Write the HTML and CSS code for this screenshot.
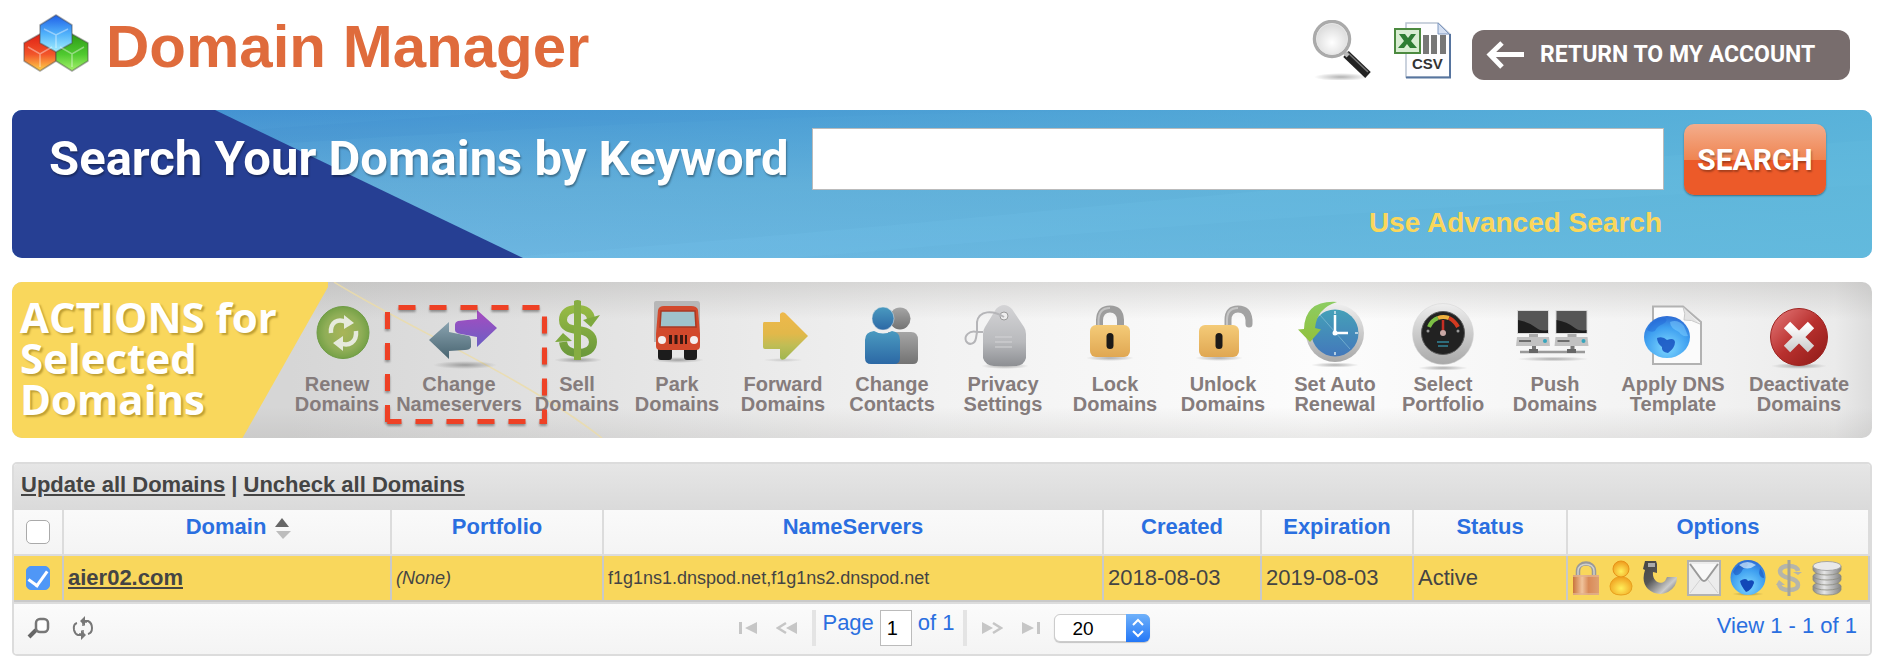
FILE: index.html
```html
<!DOCTYPE html>
<html lang="en">
<head>
<meta charset="utf-8">
<title>Domain Manager</title>
<link rel="stylesheet" href="styles.css">
</head>
<body>
<svg class="defs" aria-hidden="true">
  <defs>
    <linearGradient id="gBlueCube" x1="0" y1="0" x2="0" y2="1"><stop offset="0" stop-color="#1f5fe8"/><stop offset=".5" stop-color="#4fb0fa"/><stop offset="1" stop-color="#a5f0ff"/></linearGradient>
    <linearGradient id="gRedCube" x1="0" y1="0" x2="0" y2="1"><stop offset="0" stop-color="#e01f14"/><stop offset=".55" stop-color="#f2552a"/><stop offset="1" stop-color="#ffd34a"/></linearGradient>
    <linearGradient id="gGreenCube" x1="0" y1="0" x2="0" y2="1"><stop offset="0" stop-color="#2d9a17"/><stop offset=".55" stop-color="#4fc92f"/><stop offset="1" stop-color="#a6f26c"/></linearGradient>
    <radialGradient id="gLens" cx=".5" cy=".6" r=".6"><stop offset="0" stop-color="#fff"/><stop offset="1" stop-color="#d5d5d5"/></radialGradient>
    <linearGradient id="gSteel" x1="0" y1="0" x2="1" y2="0"><stop offset="0" stop-color="#888"/><stop offset=".4" stop-color="#e6e6e6"/><stop offset="1" stop-color="#858585"/></linearGradient>
    <linearGradient id="gBanner" x1="0" y1="0" x2="0" y2="1"><stop offset="0" stop-color="#418fd1"/><stop offset=".5" stop-color="#62a9d8"/><stop offset="1" stop-color="#6fb4e2"/></linearGradient>
    <linearGradient id="gTeal" x1="0" y1="0" x2="1" y2="0"><stop offset="0" stop-color="#5fbbdc" stop-opacity="0"/><stop offset="1" stop-color="#5fbbdc"/></linearGradient>
    <radialGradient id="gRenew"><stop offset="0" stop-color="#a9b558"/><stop offset=".7" stop-color="#8fae57"/><stop offset="1" stop-color="#76a147"/></radialGradient>
    <linearGradient id="gSlate" x1="0" y1="0" x2="0" y2="1"><stop offset="0" stop-color="#8aa3b0"/><stop offset="1" stop-color="#486470"/></linearGradient>
    <linearGradient id="gPurple" x1="0" y1="0" x2="0" y2="1"><stop offset="0" stop-color="#a84bc0"/><stop offset="1" stop-color="#6a5fc4"/></linearGradient>
    <linearGradient id="gDollar" x1="0" y1="0" x2="0" y2="1"><stop offset="0" stop-color="#95b944"/><stop offset="1" stop-color="#6d9a3c"/></linearGradient>
    <linearGradient id="gForward" x1="0" y1="0" x2="0" y2="1"><stop offset="0" stop-color="#efb94b"/><stop offset=".45" stop-color="#e2b84a"/><stop offset=".7" stop-color="#c0bd55"/><stop offset="1" stop-color="#9fb650"/></linearGradient>
    <linearGradient id="gMan" x1="0" y1="0" x2="0" y2="1"><stop offset="0" stop-color="#4a9ac0"/><stop offset="1" stop-color="#2c68a5"/></linearGradient>
    <linearGradient id="gManGrey" x1="0" y1="0" x2="0" y2="1"><stop offset="0" stop-color="#a5a5a5"/><stop offset="1" stop-color="#737373"/></linearGradient>
    <linearGradient id="gTag" x1="0" y1="0" x2="0" y2="1"><stop offset="0" stop-color="#d4d4d6"/><stop offset=".6" stop-color="#b9babd"/><stop offset="1" stop-color="#8d8f93"/></linearGradient>
    <linearGradient id="gGold" x1="0" y1="0" x2="0" y2="1"><stop offset="0" stop-color="#f4cb78"/><stop offset="1" stop-color="#e0a752"/></linearGradient>
    <linearGradient id="gClock" x1="0" y1="0" x2="0" y2="1"><stop offset="0" stop-color="#45a0b8"/><stop offset="1" stop-color="#4378bb"/></linearGradient>
    <linearGradient id="gRim" x1="0" y1="0" x2="0" y2="1"><stop offset="0" stop-color="#eee"/><stop offset="1" stop-color="#a8a8a8"/></linearGradient>
    <linearGradient id="gGreenArrow" x1="0" y1="0" x2="0" y2="1"><stop offset="0" stop-color="#8ccc62"/><stop offset="1" stop-color="#92c13c"/></linearGradient>
    <radialGradient id="gGlobe" cx=".5" cy=".75" r=".8"><stop offset="0" stop-color="#7fd8ff"/><stop offset=".6" stop-color="#3e9ff0"/><stop offset="1" stop-color="#2a62cf"/></radialGradient>
    <linearGradient id="gRed" x1="0" y1="0" x2="1" y2="1"><stop offset="0" stop-color="#e77c7c"/><stop offset=".5" stop-color="#b8302e"/><stop offset="1" stop-color="#8c1a16"/></linearGradient>
    <linearGradient id="gX" x1="0" y1="0" x2="0" y2="1"><stop offset="0" stop-color="#fff"/><stop offset="1" stop-color="#cfcfcf"/></linearGradient>
    <linearGradient id="gCopper" x1="0" y1="0" x2="1" y2="0"><stop offset="0" stop-color="#c9743c"/><stop offset=".35" stop-color="#f0c39c"/><stop offset=".6" stop-color="#d98a58"/><stop offset="1" stop-color="#dfa071"/></linearGradient>
    <radialGradient id="gAmber" cx=".5" cy=".65" r=".6"><stop offset="0" stop-color="#ffef5a"/><stop offset="1" stop-color="#f0a020"/></radialGradient>
    <linearGradient id="gPhone" x1="0" y1="0" x2="1" y2="1"><stop offset="0" stop-color="#444"/><stop offset=".4" stop-color="#555"/><stop offset=".75" stop-color="#ccc"/><stop offset="1" stop-color="#555"/></linearGradient>
    <radialGradient id="gShadow"><stop offset="0" stop-color="#000" stop-opacity=".3"/><stop offset="1" stop-color="#000" stop-opacity="0"/></radialGradient>
  </defs>
</svg>

<header class="page-header">
  <svg class="logo" viewBox="0 0 68 74" aria-hidden="true">
    <g stroke="#4a4a4a" stroke-opacity=".45" stroke-width="1.5" stroke-linejoin="round">
      <path d="M18 34 34 43V61L18 71 2 61V43Z" fill="url(#gRedCube)"/>
      <path d="M50 34 66 43V61L50 71 34 61V43Z" fill="url(#gGreenCube)"/>
      <path d="M34 15 50 25V43L34 52 18 43V25Z" fill="url(#gBlueCube)"/>
    </g>
    <g fill="none" stroke="#fff" stroke-opacity=".4" stroke-width="1.5">
      <path d="M6 47 18 54 30 47M18 54V67M38 47 50 54 62 47M50 54V67M22 29 34 35 46 29M34 35V48"/>
    </g>
  </svg>
  <h1 class="page-title">Domain Manager</h1>
  <nav class="header-tools" aria-label="Tools">
    <a class="tool" href="#search" aria-label="Search">
      <svg class="tool-icon" viewBox="0 0 60 60">
        <ellipse cx="29" cy="57" rx="27" ry="4" fill="url(#gShadow)"/>
        <path d="m34 34 22 21" stroke="#222" stroke-width="8"/>
        <path d="m35 32 21 20" stroke="#777" stroke-width="1.5"/>
        <path d="m31 31 5 5" stroke="#bbb" stroke-width="4"/>
        <circle cx="20" cy="19" r="17.5" fill="url(#gLens)" stroke="#aaa" stroke-width="3.5"/>
        <circle cx="20" cy="19" r="15.5" fill="none" stroke="#e6e6e6" stroke-width="1"/>
      </svg>
    </a>
    <a class="tool" href="#csv" aria-label="Export CSV">
      <svg class="tool-icon" viewBox="0 0 60 60">
        <path d="M14 3h32l12 11v43H14z" fill="#fdfdff" stroke="#b9c3d2" stroke-width="1.5"/>
        <path d="M58 14V57.500H14" fill="none" stroke="#56749f" stroke-width="2"/>
        <path d="m46 3 11 11H46z" fill="#d5e0f2" stroke="#7f98c0"/>
        <path d="M31 15h6v19h-6zM39 15h6v19h-6zM48 15h6v19h-6z" fill="#777"/>
        <path d="M3 9h25v24H3z" fill="#d9edd2" stroke="#4c8a40" stroke-width="2"/>
        <path d="M7 14h6l3 4 3-4h5l-5 7 6 7h-7l-3-4-3 4H6l6-7z" fill="#2f7d33"/>
        <text class="csv-text" x="20" y="49">CSV</text>
      </svg>
    </a>
    <a class="return-button" href="#account">
      <svg class="return-arrow" viewBox="0 0 38 28" aria-hidden="true"><path d="M38 13.500H5M16 2 4 13.500 16 26" fill="none" stroke="#fff" stroke-width="5"/></svg>
      <span>RETURN TO MY ACCOUNT</span>
    </a>
  </nav>
</header>

<form class="search-banner">
  <svg class="banner-art" viewBox="0 0 1860 148" preserveAspectRatio="none" aria-hidden="true">
    <path d="M0 0H1860V148H0z" fill="url(#gBanner)"/>
    <path d="M260 34C600 12 900 0 1250 0H520L240 20z" fill="#3a86cc" opacity=".2"/>
    <path d="M480 148C900 118 1200 80 1860 30V75C1300 100 1000 130 780 148z" fill="#7cc4ee" opacity=".25"/>
    <path d="M0 0H1860V148H0z" fill="url(#gTeal)" opacity=".8"/>
    <path d="M0 0H203L511 148H0z" fill="#263f93"/>
  </svg>
  <label class="search-label" for="keyword">Search Your Domains by Keyword</label>
  <input class="search-input" id="keyword" type="text">
  <button class="search-button" type="submit">SEARCH</button>
  <a class="advanced-link" href="#advanced">Use Advanced Search</a>
</form>

<section class="actions">
  <svg class="actions-art" viewBox="0 0 1860 156" preserveAspectRatio="none" aria-hidden="true">
    <path d="M322 0C400 48 510 94 590 156" fill="none" stroke="#ecdca6" stroke-width="1.500" stroke-opacity=".8"/>
    <path d="M0 0H316V5L230.500 156H0z" fill="#f9d75c"/>
  </svg>
  <h2 class="actions-title">ACTIONS for<br>Selected<br>Domains</h2>
  <ul class="action-list">
    <li><a class="action" href="#renew">
      <svg class="action-icon" viewBox="0 0 80 72"><circle cx="46" cy="32.500" r="26" fill="url(#gRenew)" stroke="#6f9c45"/><g fill="none" stroke="#e6eadc" stroke-width="4.500"><path d="M34 33C33 22 41 18 49 22"/><path d="M59 31C60 42 52 47 43 43"/></g><path d="m47 15 10 8-10 6zM46 36l-10 7 10 8z" fill="#e6eadc"/></svg>
      <span>Renew<br>Domains</span></a></li>
    <li class="highlighted"><a class="action" href="#nameservers">
      <svg class="action-icon" viewBox="0 0 80 72"><ellipse cx="46" cy="65" rx="32" ry="4" fill="url(#gShadow)"/><path d="M10 40 30 22V32L50 36Q52 37 52 41V47Q51 50 46 50L30 51V59Z" fill="url(#gSlate)"/><path d="M78 28 58 10V19L39 21Q36 22 36 25V30Q36 33 42 34L58 37V47Z" fill="url(#gPurple)"/></svg>
      <span>Change<br>Nameservers</span></a>
      <svg class="highlight" viewBox="0 0 164 122" aria-hidden="true"><g fill="none" stroke="#ee4125" stroke-width="5" stroke-dasharray="17 14"><path d="M14.500 3.500H160.500V117.500H3.500"/><path d="M3.500 118V3.500"/><path d="M3.500 117.500H8" stroke-dasharray="none"/></g></svg></li>
    <li><a class="action" href="#sell">
      <svg class="action-icon" viewBox="0 0 80 72"><ellipse cx="41" cy="60" rx="24" ry="3" fill="url(#gShadow)"/><g fill="none" stroke="url(#gDollar)"><path d="M54 20C54 12 48 9 40 9 31 9 26 13 26 20 26 28 34 29 41 30 49 31 56 34 56 42 56 49 50 53 41 53 32 53 27 49 26 42" stroke-width="8"/></g><path d="M37 1Q40.500-1 44 1V60H37z" fill="#86ad42"/><path d="m46 20 17-5-9 12zM18 42l8-9 9 8z" fill="#7ea93f"/></svg>
      <span>Sell<br>Domains</span></a></li>
    <li><a class="action" href="#park">
      <svg class="action-icon" viewBox="0 0 80 72"><ellipse cx="41" cy="60" rx="26" ry="3" fill="url(#gShadow)"/><path d="M17 3Q17 1 19 1H60Q63 1 63 4V42H17z" fill="#b7b7b7"/><path d="M21 49H35V57Q35 60 32 60H24Q21 60 21 57zM47 49H60V57Q60 60 57 60H50Q47 60 47 57z" fill="#1c1c1c"/><path d="M21 10Q22 6 27 6H54Q60 6 61 10L63 34V46Q63 50 59 50H23Q19 50 19 46V34z" fill="#d2492c"/><path d="M24 11H58L59 27H23z" fill="#9fc3cc" stroke="#a83a24" stroke-width="1.500"/><path d="M32 35h3v9h-3zM37.500 35h3v9h-3zM43 35h3v9h-3zM48 35h2v9h-2z" fill="#391811"/><circle cx="25" cy="40" r="4" fill="#f4eeee"/><circle cx="57" cy="40" r="4" fill="#f4eeee"/></svg>
      <span>Park<br>Domains</span></a></li>
    <li><a class="action" href="#forward">
      <svg class="action-icon" viewBox="0 0 80 72"><ellipse cx="40" cy="60" rx="20" ry="2" fill="url(#gShadow)" opacity=".5"/><path d="M21 22H37V14Q39 11 42 13L65 36 42 59Q38 61 37 58V49H22Q20 49 20 47V24Q20 22 21 22Z" fill="url(#gForward)"/></svg>
      <span>Forward<br>Domains</span></a></li>
    <li><a class="action" href="#contacts">
      <svg class="action-icon" viewBox="0 0 80 72"><ellipse cx="48" cy="18.500" rx="10.500" ry="11" fill="url(#gManGrey)"/><path d="M36 32H59Q66 32 66 40V59Q66 64 61 64H36z" fill="url(#gManGrey)"/><ellipse cx="31" cy="18.500" rx="11" ry="11.500" fill="url(#gMan)" stroke="#e8e8e8" stroke-width=".5"/><path d="M22 31Q31 36 40 31Q48 32 48 40V58Q48 64 42 64H19Q13 64 13 58V40Q13 32 22 31Z" fill="url(#gMan)"/></svg>
      <span>Change<br>Contacts</span></a></li>
    <li><a class="action" href="#privacy">
      <svg class="action-icon" viewBox="0 0 80 72"><ellipse cx="42" cy="66" rx="24" ry="3" fill="url(#gShadow)"/><path d="M33 9Q41 1 49 9L61 27Q63 30 63 34V58Q61 66 52 66H31Q22 65 20 58V34Q20 30 22 27Z" fill="url(#gTag)"/><circle cx="41" cy="16" r="4" fill="#eee" stroke="#999"/><path d="M41 17C30 10 16 10 14 22V32C6 30 1 36 3 41 6 46 12 44 13 38L14 32H20" fill="none" stroke="#b5b5b8" stroke-width="2"/><path d="M32 37H49M32 42H49M32 47H49" stroke="#d4d4d6"/></svg>
      <span>Privacy<br>Settings</span></a></li>
    <li><a class="action" href="#lock">
      <svg class="action-icon" viewBox="0 0 80 72"><ellipse cx="35" cy="58" rx="24" ry="3" fill="url(#gShadow)"/><path d="M24.500 28V20Q25 9 35 9T45.500 20V28" fill="none" stroke="#9d9d9d" stroke-width="7"/><path d="M23.500 28V20Q24 8 35 8" fill="none" stroke="#c2c2c2" stroke-width="2"/><rect x="15" y="25" width="40" height="32" rx="6" fill="url(#gGold)"/><rect x="31.500" y="33" width="7" height="16" rx="3.500" fill="#1c1a18"/></svg>
      <span>Lock<br>Domains</span></a></li>
    <li><a class="action" href="#unlock">
      <svg class="action-icon" viewBox="0 0 80 72"><ellipse cx="36" cy="58" rx="24" ry="3" fill="url(#gShadow)"/><path d="M45 28V20Q45 9 55 9T66 20V24" fill="none" stroke="#a3a3a3" stroke-width="7" stroke-linecap="round"/><path d="M44 26V20Q44 8 55 8" fill="none" stroke="#c5c5c5" stroke-width="2"/><rect x="16" y="25" width="40" height="32" rx="6" fill="url(#gGold)"/><rect x="32.500" y="33" width="7" height="16" rx="3.500" fill="#1c1a18"/></svg>
      <span>Unlock<br>Domains</span></a></li>
    <li><a class="action" href="#auto-renew">
      <svg class="action-icon" viewBox="0 0 80 72"><ellipse cx="40" cy="65" rx="24" ry="2.500" fill="url(#gShadow)"/><circle cx="40" cy="33" r="29" fill="url(#gRim)"/><circle cx="40" cy="33" r="23.500" fill="url(#gClock)"/><path d="m25 15 30 34" stroke="#8cc4da" stroke-opacity=".6"/><path d="M40 15V33H53" fill="none" stroke="#fff" stroke-width="2.500"/><circle cx="40" cy="33" r="2.500" fill="#fff"/><path d="M40 52v3M60 33h3M40 11v3" stroke="#d8e8f0" stroke-width="1.500"/><path d="M42 2Q10 0 9 29L3 29.500 15 42 26 29.500 20 28Q22 8 42 2Z" fill="url(#gGreenArrow)"/></svg>
      <span>Set Auto<br>Renewal</span></a></li>
    <li><a class="action" href="#portfolio">
      <svg class="action-icon" viewBox="0 0 80 72"><ellipse cx="40" cy="68" rx="25" ry="2.500" fill="url(#gShadow)"/><circle cx="40" cy="34" r="30.500" fill="url(#gRim)" stroke="#d2d2d2" stroke-width=".5"/><circle cx="40" cy="33" r="21.500" fill="#222" stroke="#5a5a5a"/><g fill="none" stroke-width="4"><path d="M26 27Q29 20 35 18" stroke="#7cbf45"/><path d="M35 18Q40 16 46 18" stroke="#efb13d"/><path d="M46 18Q52 21 55 27" stroke="#d23a20"/></g><path d="M40 20V33" stroke="#c52e24" stroke-width="2.500"/><circle cx="40" cy="33" r="3" fill="#c9a8a5"/><path d="M34 42h12M35 46h10" stroke="#2e6c7c" stroke-width="2"/><circle cx="25" cy="31" r="1.500" fill="#999"/><circle cx="55" cy="31" r="1.500" fill="#999"/></svg>
      <span>Select<br>Portfolio</span></a></li>
    <li><a class="action" href="#push">
      <svg class="action-icon" viewBox="0 0 80 72"><ellipse cx="38" cy="59" rx="36" ry="2.500" fill="url(#gShadow)"/><g id="pc"><path d="M2 10H34V34H2z" fill="#d8d8d8"/><path d="M3 11H33V33H3z" fill="#555"/><path d="M3 20Q14 22 20 27T33 30V33H3z" fill="#1e1e1e"/><path d="M14 34h9v4h-9z" fill="#aaa"/><path d="M2 37H34L35 46H1z" fill="#c2c2c2"/><path d="M4 41h12" stroke="#6d6d6d" stroke-width="2"/><circle cx="30" cy="41" r="2" fill="#36a5bc"/><path d="M17 46h4v6h-4z" fill="#777"/></g><use href="#pc" x="38.500"/><path d="M5 52H70" stroke="#999" stroke-width="2.500"/><path d="M14 51h9M52 51h9" stroke="#666" stroke-width="4"/></svg>
      <span>Push<br>Domains</span></a></li>
    <li><a class="action" href="#dns">
      <svg class="action-icon" viewBox="0 0 80 72"><path d="M20 6.500H50L68 22V64H20Z" fill="#fbfbfb" stroke="#b2b2b2" stroke-width="2"/><path d="M50 7Q53 14 51 20 58 19 67 24" fill="#e4e4e4" stroke="#c8c8c8"/><ellipse cx="34" cy="37" rx="23" ry="21" fill="url(#gGlobe)"/><path d="M24 38Q30 36 34 40 41 37 42 42 42 48 35 53 28 52 29 47 24 43 24 38Z" fill="#1550c0" fill-opacity=".85"/><path d="M17 25Q22 18 32 18 36 20 30 24 24 26 22 31 18 33 14 30Z" fill="#1f66d8" fill-opacity=".45"/><path d="M37 22Q45 19 51 26L55 36Q49 37 46 32 37 28 37 22Z" fill="#7fd0ff" fill-opacity=".5"/></svg>
      <span>Apply DNS<br>Template</span></a></li>
    <li><a class="action" href="#deactivate">
      <svg class="action-icon" viewBox="0 0 80 72"><ellipse cx="40" cy="66" rx="28" ry="3" fill="url(#gShadow)"/><circle cx="40" cy="37" r="28.500" fill="url(#gRed)" stroke="#9d2421"/><path d="m28 25 24 24M52 25 28 49" stroke="url(#gX)" stroke-width="9"/></svg>
      <span>Deactivate<br>Domains</span></a></li>
  </ul>
</section>

<section class="grid">
  <div class="grid-caption"><a href="#update">Update all Domains</a> | <a href="#uncheck">Uncheck all Domains</a></div>
  <table class="domain-table">
    <colgroup>
      <col class="col-check"><col class="col-domain"><col class="col-portfolio"><col class="col-servers"><col class="col-created"><col class="col-expires"><col class="col-status"><col class="col-options">
    </colgroup>
    <thead>
      <tr>
        <th class="check-cell"><input class="check" type="checkbox" aria-label="Select all"></th>
        <th><span class="sortable">Domain<svg class="sort-icon" viewBox="0 0 18 22" aria-hidden="true"><path d="M8 0 15 9H1z" fill="#666"/><path d="M9 21 2 13H17z" fill="#bdbdbd"/></svg></span></th>
        <th>Portfolio</th><th>NameServers</th><th>Created</th><th>Expiration</th><th>Status</th><th>Options</th>
      </tr>
    </thead>
    <tbody>
      <tr>
        <td class="check-cell"><input class="check" type="checkbox" aria-label="Select aier02.com" checked></td>
        <td><a class="domain-link" href="#domain">aier02.com</a></td>
        <td class="small"><i>(None)</i></td>
        <td class="small">f1g1ns1.dnspod.net,f1g1ns2.dnspod.net</td>
        <td>2018-08-03</td><td>2019-08-03</td><td>Active</td>
        <td>
          <div class="options">
            <a href="#o1" aria-label="Lock"><svg width="28" height="36" viewBox="0 0 28 36"><path d="M6 17V11C6 1 22 1 22 11V17" fill="none" stroke="#999" stroke-width="4.500"/><path d="M6 16V11C6 2 22 2 22 11V16" fill="none" stroke="#d0d0cc" stroke-width="1.500"/><path d="M1 15H27V35H1z" fill="url(#gCopper)"/><path d="M1 16H27M1 34H27" stroke="#e2b48e" stroke-width="1.500"/></svg></a>
            <a href="#o2" aria-label="Contact"><svg width="24" height="36" viewBox="0 0 24 36"><path d="M12 16Q22 18 23 26 23 35 12 35T1 26Q2 18 12 16Z" fill="url(#gAmber)" stroke="#e8a01c"/><circle cx="12" cy="9" r="8" fill="url(#gAmber)" stroke="#e79318"/></svg></a>
            <a href="#o3" aria-label="Forward"><svg width="36" height="36" viewBox="0 0 36 36"><path d="M3 1H14L15 4V13L11 12C10 20 17 26 23 21L25 17H35Q35 27 26 32 15 37 6 29-1 22 3 10L1 9Z" fill="url(#gPhone)"/><path d="M6 3h7v4H6z" fill="#aaa"/></svg></a>
            <a href="#o4" aria-label="Email"><svg width="34" height="36" viewBox="0 0 34 36"><path d="M1 1H33V35H1z" fill="#ececec" stroke="#b2b2b2" stroke-width="2"/><path d="M3 33 13 20M31 33 21 20" stroke="#d2d2d2"/><path d="M3 4 14 19Q17 23 20 19L31 4" fill="#f8f8f8" stroke="#999" stroke-width="2"/></svg></a>
            <a href="#o5" aria-label="Website"><svg width="36" height="36" viewBox="0 0 36 36"><ellipse cx="18" cy="34" rx="16" ry="2" fill="url(#gShadow)"/><circle cx="18" cy="17.500" r="17.500" fill="url(#gGlobe)"/><path d="M10 21Q16 17 18 21 24 19 24 23 21 31 16 32 11 26 10 21Z" fill="#1248b8"/><path d="M3 12Q8 2 17 2 20 6 13 9 10 16 5 15ZM30 8Q34 13 34 18 30 18 29 13Z" fill="#1248b8" fill-opacity=".5"/><path d="M9 5Q17-1 26 5 17 12 9 5Z" fill="#d8f0ff" fill-opacity=".7"/></svg></a>
            <a href="#o6" aria-label="Sell"><svg width="28" height="36" viewBox="0 0 28 36"><path d="M23 11Q22 6 14 6T5 11Q5 16 14 18T23 25Q23 30 14 30T4 24" fill="none" stroke="#b5b5ab" stroke-width="4.500"/><path d="M12.500 0h3v36h-3z" fill="#a4a49c"/><path d="M18 12h9l-4 3zM1 25h9l-6-5z" fill="#b5b5ab"/></svg></a>
            <a href="#o7" aria-label="Records"><svg width="30" height="36" viewBox="0 0 30 36"><g fill="url(#gSteel)" stroke="#8a8a80" stroke-width=".8"><path d="M1 26V30Q3 35 15 35T29 30V26z"/><ellipse cx="15" cy="26" rx="14" ry="4"/><path d="M1 16V20Q3 25 15 25T29 20V16z"/><ellipse cx="15" cy="16" rx="14" ry="4"/><path d="M1 6V10Q3 15 15 15T29 10V6z"/></g><ellipse cx="15" cy="6" rx="14" ry="4.500" fill="#e9e9e9" stroke="#999" stroke-width=".8"/></svg></a>
          </div>
        </td>
      </tr>
    </tbody>
  </table>
  <footer class="pager">
    <div class="pager-tools">
      <button type="button" aria-label="Find records"><svg width="24" height="24" viewBox="0 0 24 24"><path d="M2 21 9 14" stroke="#666" stroke-width="4"/><rect x="9" y="3" width="12" height="13" rx="4" fill="#fff" stroke="#777" stroke-width="2.500"/></svg></button>
      <button type="button" aria-label="Reload"><svg width="24" height="24" viewBox="0 0 24 24"><g fill="none" stroke="#777" stroke-width="2"><path d="M6 7Q2 8 3 14 4 18 7 19H13M11 5H17Q21 7 21 12T17 18"/><path d="M12 14V18H8M12 10V6H16" stroke-width="1.500"/></g><path d="m9 5 5-5v10zM15 19l-5-5v10z" fill="#777"/></svg></button>
    </div>
    <div class="pager-center">
      <button type="button" aria-label="First page"><svg width="20" height="14" viewBox="0 0 20 14"><path d="M1 1h3v12H1zM19 1v12L7 7z" fill="#c6c6c6"/></svg></button>
      <button type="button" aria-label="Previous page"><svg width="22" height="14" viewBox="0 0 22 14"><path d="M21 1v12L10 7z" fill="#c6c6c6"/><path d="M10 2 2 7 10 12" fill="none" stroke="#c6c6c6" stroke-width="2.500"/></svg></button>
      <label class="page-box">Page <input class="page-input" type="text" value="1"> of 1</label>
      <button type="button" aria-label="Next page"><svg width="22" height="14" viewBox="0 0 22 14"><path d="M1 1v12l11-6z" fill="#c6c6c6"/><path d="M12 2 20 7 12 12" fill="none" stroke="#c6c6c6" stroke-width="2.500"/></svg></button>
      <button type="button" aria-label="Last page"><svg width="20" height="14" viewBox="0 0 20 14"><path d="M16 1h3v12h-3zM1 1v12l12-6z" fill="#c6c6c6"/></svg></button>
      <span class="select-wrap">
        <select class="page-size" aria-label="Rows per page"><option>20</option><option>50</option><option>100</option></select>
        <svg class="select-arrows" viewBox="0 0 24 28" aria-hidden="true"><path d="m7 11 5-5 5 5M7 17l5 5 5-5" fill="none" stroke="#fff" stroke-width="2"/></svg>
      </span>
    </div>
    <div class="pager-info">View 1 - 1 of 1</div>
  </footer>
</section>
</body>
</html>
```
FILE: styles.css
```css
* { box-sizing: border-box; }

body {
  margin: 0;
  padding: 0 10px 0 12px;
  background: #fff;
  color: #444;
  font: 22px/26px "Liberation Sans", Arial, sans-serif;
}

.defs { position: absolute; width: 0; height: 0; }

button {
  padding: 0;
  border: 0;
  background: none;
  font: inherit;
  cursor: pointer;
}

/* Header */
.page-header {
  display: flex;
  align-items: flex-start;
  height: 110px;
  padding: 0 22px 0 10px;
}

.logo { width: 68px; height: 74px; }

.page-title {
  margin: 14px 0 0 16px;
  color: #df6b3c;
  font-size: 60px;
  line-height: 66px;
}

.header-tools {
  display: flex;
  align-items: flex-start;
  gap: 20px;
  margin-left: auto;
  padding-top: 20px;
}

.tool-icon { display: block; width: 60px; height: 60px; }

.csv-text { fill: #333; font: bold 15px "Liberation Sans", Arial, sans-serif; }

.return-button {
  display: flex;
  align-items: center;
  gap: 16px;
  width: 378px;
  height: 50px;
  margin-top: 10px;
  padding-left: 14px;
  border-radius: 12px;
  background: #786d6d;
  color: #fff;
  font: bold 23px/30px Roboto, "Liberation Sans", sans-serif;
  text-decoration: none;
  white-space: nowrap;
}

.return-arrow { flex: none; width: 38px; height: 28px; }

/* Search banner */
.search-banner {
  position: relative;
  z-index: 0;
  display: grid;
  grid-template-columns: 743px 1fr 142px;
  column-gap: 20px;
  align-content: start;
  align-items: start;
  height: 148px;
  padding: 14px 46px 0 37px;
  border-radius: 10px;
  overflow: hidden;
}

.banner-art, .actions-art {
  position: absolute;
  inset: 0;
  z-index: -1;
  width: 100%;
  height: 100%;
}

.search-label {
  padding-top: 4px;
  color: #fff;
  font: bold 49px/62px Roboto, "Liberation Sans", sans-serif;
  text-shadow: 1px 2px 2px rgba(0, 0, 0, .35);
  white-space: nowrap;
}

.search-input {
  width: 100%;
  height: 62px;
  margin-top: 4px;
  padding: 0 10px;
  border: 1px solid #bbb;
  background: #fff;
  font: 28px "Liberation Sans", Arial, sans-serif;
}

.search-button {
  height: 71px;
  border-radius: 10px;
  background: linear-gradient(#f4ad8c, #ef8552 50%, #ec5a29 51%, #ec5a29);
  box-shadow: 0 1px 2px rgba(0, 0, 0, .4);
  color: #fff;
  font: bold 30px/40px Roboto, "Liberation Sans", sans-serif;
  text-shadow: 1px 2px 2px rgba(0, 0, 0, .3);
}

.advanced-link {
  grid-column: 2;
  justify-self: end;
  margin-top: 12px;
  padding-right: 2px;
  color: #fbd75b;
  font-size: 28px;
  font-weight: bold;
  line-height: 32px;
  text-decoration: none;
}

/* Bulk actions */
.actions {
  position: relative;
  z-index: 0;
  display: flex;
  height: 156px;
  margin-top: 24px;
  padding-right: 6px;
  border-radius: 10px;
  background:
    linear-gradient(rgba(160, 158, 155, .3), rgba(160, 158, 155, 0) 24%, rgba(160, 158, 155, 0) 80%, rgba(160, 158, 155, .2)),
    linear-gradient(90deg, #d6d6d6 15%, #f2f2f2 50%, #fcfcfc 70%, #f1f1f1 92%, #ebebeb 98%, #dcdcdc);
  overflow: hidden;
}

.actions-title {
  flex: none;
  width: 268px;
  margin: 14px 0 0;
  padding-left: 8px;
  color: #fff;
  font: bold 42px/41px "Open Sans", "Noto Sans", sans-serif;
  text-shadow: 2px 2px 2px rgba(120, 90, 0, .45);
  white-space: nowrap;
}

.action-list {
  flex: 1;
  display: grid;
  grid-template-columns: 114fr 130fr 106fr 94fr 118fr 100fr 122fr 102fr 114fr 110fr 106fr 118fr 118fr 134fr;
  margin: 0;
  padding: 18px 0 0;
  list-style: none;
}

.action-list li { position: relative; min-width: 0; }

.action {
  display: flex;
  flex-direction: column;
  align-items: center;
  gap: 2px;
  color: #857c7c;
  font-size: 20px;
  font-weight: bold;
  line-height: 20px;
  text-align: center;
  text-decoration: none;
  white-space: nowrap;
}

.action-icon { display: block; width: 80px; height: 72px; overflow: visible; }

.highlighted { z-index: 1; }

.highlight {
  position: absolute;
  top: 4px;
  left: -10px;
  width: 164px;
  height: 122px;
  filter: drop-shadow(0 2px 1px rgba(0, 0, 0, .35));
  pointer-events: none;
}

/* Domain grid */
.grid {
  margin-top: 24px;
  border: 2px solid #dcdcdc;
  border-radius: 5px;
  overflow: hidden;
}

.grid-caption {
  height: 46px;
  padding: 8px 7px;
  background: linear-gradient(#e6e6e6, #dadada);
  font-weight: bold;
}

.grid-caption a, .domain-link { color: #444; }

.domain-table {
  width: 100%;
  border-collapse: separate;
  border-spacing: 0;
  table-layout: fixed;
}

.col-check { width: 50px; }
.col-domain { width: 328px; }
.col-portfolio { width: 212px; }
.col-created { width: 158px; }
.col-expires { width: 152px; }
.col-status { width: 154px; }
.col-options { width: 302px; }

.domain-table th {
  height: 46px;
  padding: 4px 4px 0;
  border-right: 2px solid #dcdcdc;
  border-bottom: 2px solid #dcdcdc;
  background: linear-gradient(#fafafa, #f4f4f4);
  color: #2a6fe0;
  vertical-align: top;
}

.domain-table td {
  height: 46px;
  padding: 0 4px;
  border-right: 2px solid #c9c9c9;
  border-bottom: 2px solid #c9c9c9;
  background: #f9d75c;
}

.domain-table .check-cell { padding: 0 0 0 12px; text-align: left; vertical-align: middle; }

.domain-table .small { font-size: 18px; }

.domain-link { font-weight: bold; }

.sortable { display: inline-flex; align-items: center; gap: 8px; padding-left: 24px; }

.sort-icon { width: 18px; height: 22px; margin-top: 4px; }

.check {
  appearance: none;
  display: flex;
  align-items: center;
  justify-content: center;
  width: 24px;
  height: 24px;
  margin: 0;
  border: 1px solid #aaa;
  border-radius: 5px;
  background: #fff;
}

.check:checked {
  border-color: #4f97f7;
  background: #4f97f7;
}

.check:checked::after {
  content: "";
  width: 9px;
  height: 16px;
  margin-bottom: 4px;
  border: solid #fff;
  border-width: 0 3px 3px 0;
  transform: rotate(36deg);
}

.options { display: flex; gap: 9px; }
.options a, .options svg { display: block; }

/* Pager */
.pager {
  display: grid;
  grid-template-columns: 1fr auto 1fr;
  align-items: center;
  height: 52px;
  padding: 0 13px 2px;
  border-top: 2px solid #dcdcdc;
  background: linear-gradient(#fbfbfb, #f4f4f4);
  color: #2a6fe0;
}

.pager button svg { display: block; }

.pager-tools { display: flex; gap: 20px; }

.pager-center { display: flex; align-items: center; gap: 18px; padding-left: 4px; }

.page-box {
  display: flex;
  align-items: flex-start;
  gap: 6px;
  height: 36px;
  margin: 0 -4px;
  padding: 0 8px 0 6px;
  border: solid #e4e4e4;
  border-width: 0 4px;
}

.page-input {
  width: 32px;
  height: 36px;
  padding: 0 6px;
  border: 1px solid #bbb;
  background: #fff;
  color: #000;
  font: 20px "Liberation Sans", Arial, sans-serif;
}

.select-wrap { position: relative; display: block; margin-left: -5px; }

.page-size {
  appearance: none;
  display: block;
  width: 96px;
  height: 28px;
  padding: 0 18px;
  border: 1px solid #ccc;
  border-radius: 6px;
  background: #fff;
  box-shadow: 0 1px 1px rgba(0, 0, 0, .2);
  color: #000;
  font: 19px "Liberation Sans", Arial, sans-serif;
}

.select-arrows {
  position: absolute;
  top: 0;
  right: 0;
  width: 24px;
  height: 28px;
  border-radius: 0 6px 6px 0;
  background: linear-gradient(#6fb1fa, #2377f7);
  pointer-events: none;
}

.pager-info { padding-bottom: 4px; text-align: right; }
```
